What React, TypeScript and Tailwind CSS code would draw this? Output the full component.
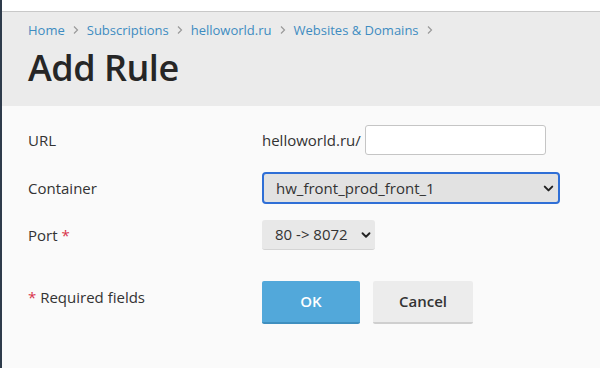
import { ChevronDown } from 'lucide-react';

const crumbs = ['Home', 'Subscriptions', 'helloworld.ru', 'Websites & Domains'];

function Chevron() {
  return (
    <svg width="8" height="10" viewBox="0 0 8 10" className="mx-[7px] shrink-0">
      <path d="M2 1.5 L5.5 5 L2 8.5" fill="none" stroke="#9a9a9a" strokeWidth="1.2" />
    </svg>
  );
}

export default function App() {
  return (
    <div
      className="w-[600px] h-[368px] overflow-hidden flex bg-[#fafafa] text-[#333]"
      style={{ fontFamily: '"Open Sans", "Liberation Sans", sans-serif' }}
    >
      {/* dark side edge */}
      <div className="w-[2px] bg-[#2e3b4b] shrink-0" />

      <div className="flex-1 flex flex-col">
        {/* top white strip */}
        <div className="h-[12px] bg-white border-b border-[#c8c8c8]" />

        {/* header */}
        <div className="bg-[#ebebeb] h-[94px] pl-[26px] pt-[8px]">
          <div className="flex items-center text-[13px] text-[#3e8cc1] leading-[20px]">
            {crumbs.map((c) => (
              <span key={c} className="flex items-center">
                <span>{c}</span>
                <Chevron />
              </span>
            ))}
          </div>
          <h1 className="text-[36px] font-semibold text-[#262626] leading-[44px] mt-[6px] tracking-[-0.5px]">
            Add Rule
          </h1>
        </div>

        {/* form */}
        <div className="pl-[26px] pt-[19px] text-[15px]">
          <div className="flex items-center h-[30px]">
            <div className="w-[234px]">URL</div>
            <span className="mr-[4px]">helloworld.ru/</span>
            <input className="w-[181px] h-[30px] bg-white border border-[#c5c5c5] rounded-[3px] outline-none" />
          </div>

          <div className="flex items-center h-[32px] mt-[17px]">
            <div className="w-[234px]">Container</div>
            <div className="w-[298px] h-[32px] rounded-[4px] border-2 border-[#2f6fd6] bg-[#e2e2e2] flex items-center pl-[12px] pr-[2px] justify-between">
              <span>hw_front_prod_front_1</span>
              <ChevronDown className="w-[15px] h-[15px] text-[#222]" strokeWidth={3.2} />
            </div>
          </div>

          <div className="flex items-center h-[30px] mt-[16px]">
            <div className="w-[234px]">
              Port <span className="text-[#d8334a]">*</span>
            </div>
            <div className="w-[113px] h-[30px] rounded-[3px] bg-[#e8e8e8] border-b border-[#d4d4d4] flex items-center pl-[13px] pr-[2px] justify-between">
              <span>80 -&gt; 8072</span>
              <ChevronDown className="w-[14px] h-[14px] text-[#222]" strokeWidth={3.2} />
            </div>
          </div>

          <div className="flex items-start mt-[31px]">
            <div className="w-[234px] pt-[5px]">
              <span className="text-[#d8334a]">*</span> Required fields
            </div>
            <button className="w-[98px] h-[43px] bg-[#52a8da] border-b-2 border-[#3f8fbf] rounded-[2px] text-white text-[15px] font-semibold">
              OK
            </button>
            <button className="w-[100px] h-[43px] ml-[13px] bg-[#ececec] border-b-2 border-[#cfcfcf] rounded-[2px] text-[#333] text-[15px] font-semibold">
              Cancel
            </button>
          </div>
        </div>
      </div>
    </div>
  );
}
